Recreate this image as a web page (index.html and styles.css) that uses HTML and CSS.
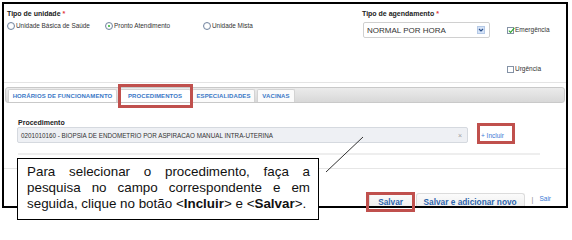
FILE: index.html
```html
<!DOCTYPE html>
<html lang="pt-BR">
<head>
<meta charset="utf-8">
<title>Procedimentos</title>
<link rel="stylesheet" href="styles.css">
</head>
<body>
<div class="frame">
  <div class="top">
    <div class="unit">
      <div class="lbl">Tipo de unidade <span class="req">*</span></div>
      <div class="radios">
        <label class="radio"><span class="rb"></span>Unidade Básica de Saúde</label>
        <label class="radio"><span class="rb on"></span>Pronto Atendimento</label>
        <label class="radio"><span class="rb"></span>Unidade Mista</label>
      </div>
    </div>
    <div class="sched">
      <div class="lbl">Tipo de agendamento <span class="req">*</span></div>
      <div class="select">
        <span>NORMAL POR HORA</span>
        <span class="arrow"><svg width="6" height="6" viewBox="0 0 6 6"><path d="M1 2 L3 4 L5 2" fill="none" stroke="#2a4f8a" stroke-width="1.2"/></svg></span>
      </div>
    </div>
    <div class="checks">
      <label class="check"><span class="cb on"><svg width="9" height="9" viewBox="0 0 9 9"><path d="M1.8 4.6 L3.6 6.4 L7.4 1.8" fill="none" stroke="#2fa82f" stroke-width="1.1"/></svg></span>Emergência</label>
      <label class="check"><span class="cb"></span>Urgência</label>
    </div>
  </div>

  <div class="tabs">
    <div class="tab t1">HORÁRIOS DE FUNCIONAMENTO</div>
    <div class="tab t2 active hl-tab">PROCEDIMENTOS</div>
    <div class="tab t3">ESPECIALIDADES</div>
    <div class="tab t4">VACINAS</div>
  </div>

  <div class="proc">
    <div class="plbl">Procedimento</div>
    <div class="prow">
      <div class="input">
        <span>0201010160 - BIOPSIA DE ENDOMETRIO POR ASPIRACAO MANUAL INTRA-UTERINA</span>
        <span class="clear">×</span>
      </div>
      <span class="add hl-add">+ Incluir</span>
    </div>
    <div class="pline"></div>
  </div>

  <div class="sep"></div>

  <div class="actions">
    <div class="btn b1 hl-save">Salvar</div>
    <div class="btn b2">Salvar e adicionar novo</div>
    <span class="pipe">|</span>
    <span class="exit">Sair</span>
  </div>
</div>

<div class="callout">Para selecionar o procedimento, faça a pesquisa no campo correspondente e em seguida, clique no botão &lt;<b>Incluir</b>&gt; e &lt;<b>Salvar</b>&gt;.</div>

<svg class="leader" width="572" height="223" viewBox="0 0 572 223"><line x1="326" y1="172" x2="363" y2="137" stroke="#333" stroke-width="1"/></svg>
</body>
</html>
```

FILE: styles.css
```css
body {
  margin: 0;
  width: 572px;
  height: 223px;
  position: relative;
  overflow: hidden;
  background: #fff;
  font-family: "Liberation Sans", Arial, sans-serif;
}

.frame {
  margin: 2px 0 0 2px;
  width: 562px;
  height: 202px;
  border: 2px solid #000;
  position: relative;
}

/* top section */
.top {
  display: flex;
  height: 78px;
  padding-left: 3px;
  border-bottom: 1px solid #e4e4e4;
}
.unit { width: 355px; }
.sched { width: 128px; }
.lbl {
  margin-top: 6px;
  font-size: 7px;
  line-height: 8px;
  font-weight: bold;
  color: #222;
}
.req { color: #e23a3a; }

.radios { display: flex; margin-top: 4px; }
.radio {
  width: 98px;
  display: flex;
  align-items: center;
  font-size: 6.4px;
  line-height: 8px;
  color: #333;
}
.rb {
  width: 8px;
  height: 8px;
  box-sizing: border-box;
  border: 1px solid #7486a0;
  border-radius: 50%;
  background: radial-gradient(#fff 40%, #e3e8ef);
  margin-right: 1px;
  position: relative;
}
.rb.on::after {
  content: "";
  position: absolute;
  left: 2px;
  top: 2px;
  width: 2px;
  height: 2px;
  border-radius: 50%;
  background: #2db52d;
}

.select {
  margin: 4px 0 0 1px;
  width: 127px;
  height: 16px;
  box-sizing: border-box;
  border: 1px solid #d0d0d0;
  border-radius: 2px;
  display: flex;
  align-items: center;
  justify-content: space-between;
  padding: 0 4px 0 3px;
  font-size: 8px;
  color: #333;
}
.arrow {
  width: 8px;
  height: 8px;
  box-sizing: border-box;
  border: 1px solid #b5c9e6;
  background: #d5e3f7;
  display: flex;
  align-items: center;
  justify-content: center;
}

.checks { margin-left: 17px; padding-top: 22px; }
.check {
  display: flex;
  align-items: center;
  font-size: 6.5px;
  line-height: 8px;
  color: #333;
}
.check + .check { margin-top: 31px; }
.cb {
  width: 7px;
  height: 7px;
  box-sizing: border-box;
  border: 1px solid #8492a6;
  background: #fff;
  margin-right: 1px;
  position: relative;
}
.cb svg { position: absolute; left: -1px; top: -2px; }

/* tabs */
.tabs {
  margin: 4px 1px 0;
  height: 13px;
  padding: 1px 0 0 2px;
  border: 1px solid #c9c9c9;
  border-radius: 3px;
  background: linear-gradient(#ebebeb, #d8d8d8);
  display: flex;
  align-items: flex-end;
}
.tab {
  height: 13px;
  box-sizing: border-box;
  background: #fff;
  border: 1px solid #d3d3d3;
  border-bottom: none;
  border-radius: 2px 2px 0 0;
  display: flex;
  align-items: center;
  justify-content: center;
  font-size: 6px;
  font-weight: bold;
  letter-spacing: 0.1px;
  color: #3a78c6;
}
.t1 { width: 109px; margin-right: 2px; }
.t2 { width: 72px; margin-right: 1px; }
.t3 { width: 63px; margin-right: 2px; background: #fbfbfb; }
.t4 { width: 38px; background: #fbfbfb; }

.hl-tab, .hl-add, .hl-save { position: relative; }
.hl-tab::after, .hl-add::after, .hl-save::after {
  content: "";
  position: absolute;
  border: 3px solid #c0504d;
}
.hl-tab::after { left: -2px; right: -3px; top: -6px; bottom: -6px; }

/* procedimento */
.proc { padding-left: 13px; }
.plbl {
  margin-top: 15px;
  padding-left: 1px;
  font-size: 7px;
  line-height: 9px;
  font-weight: bold;
  color: #222;
}
.prow { display: flex; align-items: center; }
.input {
  width: 451px;
  height: 16px;
  box-sizing: border-box;
  border: 1px solid #d5d9df;
  border-radius: 2px;
  background: #eef0f4;
  display: flex;
  align-items: center;
  justify-content: space-between;
  padding: 0 5px 0 3px;
  font-size: 6.3px;
  color: #333;
}
.clear { font-size: 7px; color: #a0a0a0; }
.add {
  margin-left: 13px;
  font-size: 6.5px;
  line-height: 9px;
  color: #3a7bd5;
}
.hl-add::after { left: -4px; right: -11px; top: -8px; bottom: -4px; }

.pline {
  margin: 10px 0 0 1px;
  width: 522px;
  border-top: 2px solid #eeeeee;
}

.sep { margin-top: 13px; border-top: 1px solid #e6e6e6; }

/* actions */
.actions {
  height: 37px;
  display: flex;
  justify-content: flex-end;
  align-items: flex-end;
  padding-right: 15px;
}
.btn {
  height: 13px;
  box-sizing: border-box;
  border: 1px solid #dcdcdc;
  border-bottom: none;
  border-radius: 3px 3px 0 0;
  background: linear-gradient(#fbfbfb, #f0f0f0);
  padding-top: 4px;
  font-size: 8.3px;
  line-height: 9px;
  font-weight: bold;
  color: #2f66ad;
  text-align: center;
}
.b1 { width: 44px; margin-right: 3px; }
.b2 { width: 109px; }
.hl-save::after { left: -4px; right: -3px; top: -2px; bottom: -6px; }
.pipe {
  margin: 0 0 2px 7px;
  font-size: 7px;
  line-height: 9px;
  color: #888;
}
.exit {
  margin: 0 0 3px 6px;
  font-size: 6.5px;
  line-height: 9px;
  color: #3a7bd5;
}

/* annotation */
.callout {
  position: absolute;
  left: 17px;
  top: 158px;
  width: 302px;
  height: 62px;
  box-sizing: border-box;
  border: 1px solid #000;
  background: #fff;
  padding: 5px 8px 0 9px;
  font-size: 13.4px;
  line-height: 16px;
  color: #111;
  text-align: justify;
}
.leader {
  position: absolute;
  left: 0;
  top: 0;
  pointer-events: none;
}
```
